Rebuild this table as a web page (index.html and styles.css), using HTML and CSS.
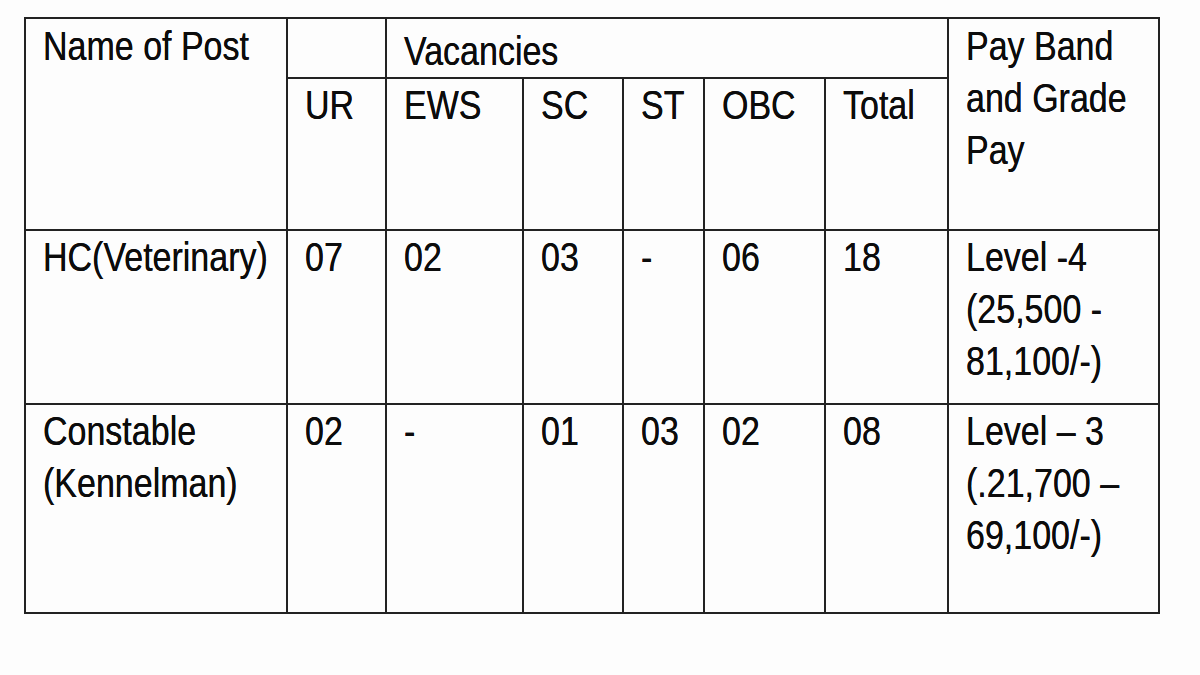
FILE: index.html
```html
<!DOCTYPE html>
<html>
<head>
<meta charset="utf-8">
<link rel="stylesheet" href="styles.css">
</head>
<body>
<table class="vac">
  <colgroup>
    <col class="c-post"><col class="c-ur"><col class="c-ews"><col class="c-sc"><col class="c-st"><col class="c-obc"><col class="c-total"><col class="c-pay">
  </colgroup>
  <tr class="h1">
    <td rowspan="2" class="hd"><span class="t">Name of Post</span></td>
    <td class="blank"></td>
    <td colspan="5" class="vhead"><span class="t">Vacancies</span></td>
    <td rowspan="2" class="hd"><span class="t">Pay Band<br>and Grade<br>Pay</span></td>
  </tr>
  <tr class="h2">
    <td><span class="t">UR</span></td><td><span class="t">EWS</span></td><td><span class="t">SC</span></td><td><span class="t">ST</span></td><td><span class="t">OBC</span></td><td><span class="t">Total</span></td>
  </tr>
  <tr class="r1">
    <td><span class="t">HC(Veterinary)</span></td><td><span class="t">07</span></td><td><span class="t">02</span></td><td><span class="t">03</span></td><td><span class="t">-</span></td><td><span class="t">06</span></td><td><span class="t">18</span></td>
    <td><span class="t">Level -4<br>(25,500 -<br>81,100/-)</span></td>
  </tr>
  <tr class="r2">
    <td><span class="t">Constable<br>(Kennelman)</span></td><td><span class="t">02</span></td><td><span class="t">-</span></td><td><span class="t">01</span></td><td><span class="t">03</span></td><td><span class="t">02</span></td><td><span class="t">08</span></td>
    <td><span class="t">Level – 3<br>(.21,700 –<br>69,100/-)</span></td>
  </tr>
</table>
</body>
</html>
```

FILE: styles.css
```css
html, body {
  margin: 0;
  padding: 0;
  background: #fdfdfd;
}
body {
  width: 1200px;
  height: 675px;
  overflow: hidden;
}
.vac {
  margin: 17px 0 0 24px;
  border-collapse: collapse;
  table-layout: fixed;
  width: 1136px;
  font-family: "Liberation Sans", Arial, sans-serif;
  font-size: 40px;
  line-height: 52px;
  color: #0c0c0c;
  text-shadow: 0 0 0.6px #0c0c0c;
}
.c-post { width: 262px; }
.c-ur { width: 99px; }
.c-ews { width: 137px; }
.c-sc { width: 100px; }
.c-st { width: 81px; }
.c-obc { width: 121px; }
.c-total { width: 123px; }
.c-pay { width: 211px; }
.vac td {
  border: 2px solid #222;
  vertical-align: top;
  padding: 0 0 0 17px;
  overflow: visible;
}
.t {
  display: inline-block;
  white-space: nowrap;
  transform: scaleX(0.85);
  transform-origin: 0 0;
}
.h1 td { height: 52px; padding-top: 1px; }
.h1 td.vhead { padding-top: 6px; }
.h2 td { height: 150px; padding-top: 0; }
.r1 td { height: 172px; padding-top: 0; }
.r2 td { height: 207px; padding-top: 0; }
```
